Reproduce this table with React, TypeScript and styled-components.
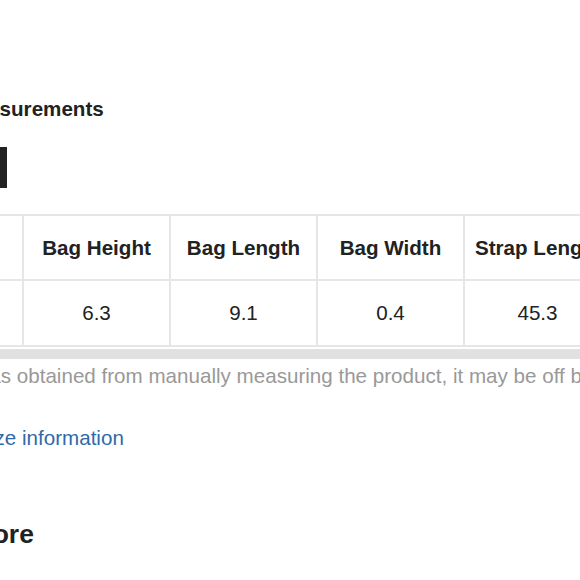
import React from "react";
import styled, { createGlobalStyle } from "styled-components";

const Global = createGlobalStyle`
  html, body {
    margin: 0;
    padding: 0;
    background: #ffffff;
    overflow: hidden;
  }
  body {
    font-family: "Liberation Sans", Arial, sans-serif;
    color: #222222;
  }
`;

const Viewport = styled.div`
  width: 580px;
  height: 580px;
  overflow: hidden;
`;

const Page = styled.div`
  display: flex;
  flex-direction: column;
  align-items: flex-start;
  margin-left: -124px;
  padding-top: 97px;
`;

const Title = styled.h2`
  margin: 0;
  font-size: 20.6px;
  line-height: 24px;
  font-weight: 700;
  color: #222222;
  white-space: nowrap;
`;

const UnitButton = styled.button`
  margin-top: 26px;
  width: 131px;
  height: 41px;
  border: 0;
  padding: 0;
  background: #222222;
  color: #ffffff;
  font-family: inherit;
  font-size: 18px;
  font-weight: 700;
`;

const TableBlock = styled.div`
  margin-top: 26px;
  margin-left: -1px;
  display: flex;
  flex-direction: column;
  gap: 2px;
`;

const SizeTable = styled.table`
  border-collapse: collapse;
  table-layout: fixed;
  width: ${5 * 147}px;
  border: 2px solid #e6e6e6;
`;

const Column = styled.col`
  width: 147px;
`;

const HeadCell = styled.th`
  height: 63px;
  padding: 0 10px;
  border: 2px solid #e6e6e6;
  font-size: 20.6px;
  font-weight: 700;
  color: #222222;
  text-align: center;
  white-space: nowrap;
  overflow: visible;
`;

const ValueCell = styled.td`
  height: 64px;
  padding: 0 10px;
  border: 2px solid #e6e6e6;
  font-size: 20.6px;
  font-weight: 400;
  color: #222222;
  text-align: center;
  white-space: nowrap;
`;

const ScrollTrack = styled.div`
  width: 860px;
  height: 10px;
  background: #e1e1e1;
`;

const Note = styled.p`
  margin: 5px 0 0;
  font-size: 20.6px;
  line-height: 24px;
  color: #999999;
  white-space: nowrap;
`;

const InfoLink = styled.a`
  margin-top: 38px;
  margin-left: 1px;
  font-size: 20.6px;
  line-height: 24px;
  color: #2f6aa9;
  text-decoration: none;
  white-space: nowrap;
`;

const SectionHeading = styled.h3<{ $indent: number }>`
  margin: 69px 0 0 ${(p) => p.$indent}px;
  font-size: 26.5px;
  line-height: 30px;
  font-weight: 700;
  color: #222222;
  white-space: nowrap;
`;

const columns = ["Size", "Bag Height", "Bag Length", "Bag Width", "Strap Length"];
const values = ["one-size", "6.3", "9.1", "0.4", "45.3"];

export default function App() {
  return (
    <Viewport>
      <Global />
      <Page>
        <Title>Product Measurements</Title>
        <UnitButton>CM</UnitButton>
        <TableBlock>
          <SizeTable>
            <colgroup>
              {columns.map((c) => (
                <Column key={c} />
              ))}
            </colgroup>
            <thead>
              <tr>
                {columns.map((c) => (
                  <HeadCell key={c}>{c}</HeadCell>
                ))}
              </tr>
            </thead>
            <tbody>
              <tr>
                {values.map((v, i) => (
                  <ValueCell key={i}>{v}</ValueCell>
                ))}
              </tr>
            </tbody>
          </SizeTable>
          <ScrollTrack />
        </TableBlock>
        <Note>
          *This data was obtained from manually measuring the product, it may be off by 1-2 CM.
        </Note>
        <InfoLink href="#">View more size information</InfoLink>
        <SectionHeading $indent={21}>Shop More</SectionHeading>
      </Page>
    </Viewport>
  );
}
